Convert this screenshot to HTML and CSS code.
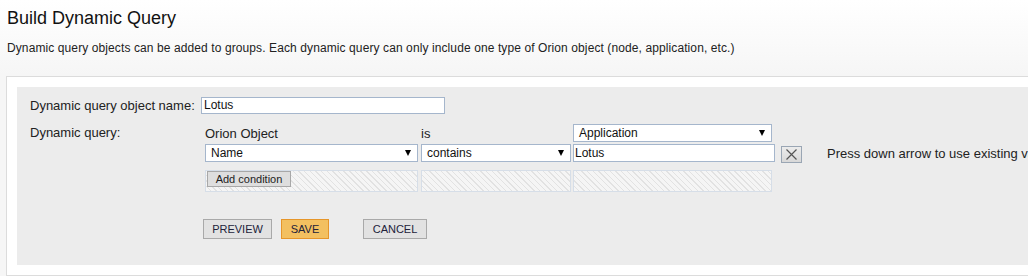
FILE: index.html
```html
<!DOCTYPE html>
<html>
<head>
<meta charset="utf-8">
<link rel="stylesheet" href="styles.css">
</head>
<body>
<div class="page">
  <h1 class="title">Build Dynamic Query</h1>
  <p class="desc">Dynamic query objects can be added to groups. Each dynamic query can only include one type of Orion object (node, application, etc.)</p>
  <div class="outer">
    <div class="panel">
      <div class="row row-name">
        <div class="label">Dynamic query object name:</div>
        <div class="input name-input">Lotus</div>
      </div>
      <div class="row row-query">
        <div class="label">Dynamic query:</div>
        <div class="builder">
          <div class="cell-text c1 r1">Orion Object</div>
          <div class="cell-text c2 r1">is</div>
          <div class="select c3 r1 app">Application<span class="arrow"></span></div>

          <div class="select c1 r2">Name<span class="arrow"></span></div>
          <div class="select c2 r2">contains<span class="arrow"></span></div>
          <div class="input c3 r2 value">Lotus</div>
          <div class="remove c4 r2"><svg width="13" height="13" viewBox="0 0 13 13"><path d="M1.5 1.5 L11.5 11.5 M11.5 1.5 L1.5 11.5" stroke="#555" stroke-width="1.2" fill="none"/></svg></div>
          <div class="hint c5 r2">Press down arrow to use existing values</div>

          <div class="hatch c1 r3"><span class="add-btn">Add condition</span></div>
          <div class="hatch c2 r3"></div>
          <div class="hatch c3 r3 hatch-val"></div>
        </div>
      </div>
      <div class="actions">
        <span class="btn">PREVIEW</span>
        <span class="btn btn-save">SAVE</span>
        <span class="btn btn-cancel">CANCEL</span>
      </div>
    </div>
  </div>
</div>
</body>
</html>
```

FILE: styles.css
```css
html, body {
  margin: 0;
  padding: 0;
}
body {
  width: 1028px;
  height: 276px;
  overflow: hidden;
  background: linear-gradient(#ffffff 0px, #f6f6f6 75px, #f6f6f6 100%);
  font-family: "Liberation Sans", Arial, sans-serif;
  color: #222;
}
.page {
  padding-top: 7px;
}
.title {
  margin: 0 0 0 7px;
  font-size: 18px;
  font-weight: normal;
  line-height: 22px;
  color: #111;
}
.desc {
  margin: 12px 0 0 7px;
  font-size: 12px;
  line-height: 14px;
  letter-spacing: 0.1px;
  color: #222;
  white-space: nowrap;
}
.outer {
  margin: 21px 0 0 6px;
  width: 1100px;
  border: 1px solid #dcdcdc;
  background: #fff;
  padding: 10px;
  box-sizing: border-box;
}
.panel {
  background: #ececec;
  padding: 10px 0 24px 13px;
  height: 178px;
  box-sizing: border-box;
  overflow: hidden;
}
.row {
  display: flex;
  align-items: flex-start;
}
.label {
  width: 171px;
  flex: none;
  font-size: 13px;
  line-height: 17px;
  color: #222;
}
.input, .select {
  box-sizing: border-box;
  background: #fff;
  border: 1px solid #a5b6cc;
  font-size: 12px;
  color: #111;
  white-space: nowrap;
}
.name-input {
  width: 244px;
  height: 17px;
  line-height: 15px;
  padding-left: 2px;
}
.row-query {
  margin-top: 10px;
}
.builder {
  margin-left: 4px;
  display: grid;
  grid-template-columns: 213px 151px 202px 25px auto;
  grid-template-rows: auto auto auto;
  column-gap: 2px;
  align-items: start;
}
.c1 { grid-column: 1; }
.c2 { grid-column: 2; margin-left: 1px; }
.c3 { grid-column: 3; }
.c4 { grid-column: 4; }
.c5 { grid-column: 5; }
.r1 { grid-row: 1; }
.r2 { grid-row: 2; }
.r3 { grid-row: 3; }
.cell-text {
  font-size: 13px;
  line-height: 18px;
  padding-top: 1px;
  height: 18px;
  color: #222;
}
.select {
  height: 18px;
  line-height: 16px;
  padding-left: 5px;
  position: relative;
}
.arrow {
  position: absolute;
  right: 6px;
  top: 5px;
  width: 0;
  height: 0;
  border-left: 3px solid transparent;
  border-right: 3px solid transparent;
  border-top: 6px solid #000;
}
.app {
  width: 199px;
  margin-bottom: 2px;
}
.value {
  height: 18px;
  line-height: 16px;
  padding-left: 1px;
  width: 202px;
}
.remove {
  box-sizing: border-box;
  margin-left: 4px;
  margin-top: 2px;
  width: 21px;
  height: 17px;
  background: linear-gradient(#ececec, #d8d8d8);
  border: 1px solid #9aa6b4;
  display: flex;
  align-items: center;
  justify-content: center;
}
.hint {
  margin-left: 23px;
  padding-top: 1px;
  font-size: 13px;
  line-height: 17px;
  white-space: nowrap;
  color: #222;
}
.hatch {
  box-sizing: border-box;
  height: 22px;
  margin-top: 7px;
  border: 1px solid #d6dee8;
  background-color: #f5f5f5;
  background-image: repeating-linear-gradient(45deg, transparent 0px, transparent 3px, #e2e2e2 3px, #e2e2e2 4px);
  padding: 0 0 0 1px;
}
.hatch.c2 {
  width: 150px;
}
.hatch-val {
  width: 199px;
}
.add-btn {
  display: inline-block;
  box-sizing: border-box;
  width: 84px;
  height: 16px;
  background: #dedede;
  border: 1px solid #a8a8a8;
  font-size: 11px;
  line-height: 14px;
  text-align: center;
  color: #222;
  vertical-align: top;
}
.actions {
  margin-top: 27px;
  margin-left: 173px;
  display: flex;
}
.btn {
  box-sizing: border-box;
  height: 20px;
  line-height: 18px;
  border: 1px solid #a9a9a9;
  background: #e2e2e2;
  font-size: 11px;
  color: #22223a;
  text-align: center;
  width: 69px;
}
.btn-save {
  margin-left: 9px;
  width: 48px;
  background: #f3c060;
  border-color: #e6962a;
}
.btn-cancel {
  margin-left: 34px;
  width: 64px;
}
```
